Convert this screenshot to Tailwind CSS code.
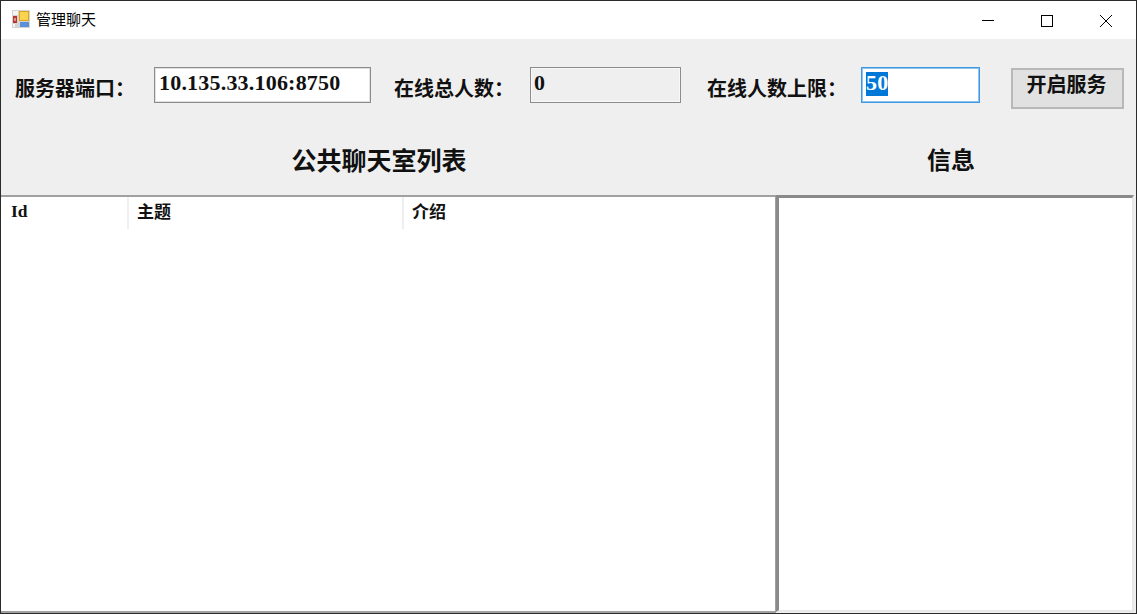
<!DOCTYPE html>
<html lang="zh-CN">
<head>
    <meta charset="UTF-8">
    <title>管理聊天</title>
    <script src="https://cdn.jsdelivr.net/npm/@tailwindcss/browser@4"></script>
</head>
<body class="bg-[#2b2b2b]">
    <div class="w-[1137px] h-[614px] border border-[#2b2b2b] flex flex-col bg-[#efefef] overflow-hidden font-['Liberation_Serif','Noto_Sans_CJK_SC',serif] text-[#111]">

        <!-- title bar -->
        <header class="h-[38px] shrink-0 bg-white flex items-center font-['Noto_Sans_CJK_SC',sans-serif]">
            <svg class="ml-[11px] -mt-[2px] w-[18px] h-[18px]" viewBox="0 0 18 18">
                <rect width="18" height="18" fill="#d4d4d4" />
                <rect x="1" y="1" width="5" height="4" fill="#f4f4f4" />
                <rect x="1" y="6" width="4" height="7" fill="#b8342e" />
                <rect x="2" y="8" width="2" height="3" fill="#e89088" />
                <rect x="1" y="14" width="2" height="3" fill="#f4f4f4" />
                <rect x="7" y="1" width="10" height="10" fill="#d9a520" />
                <rect x="8" y="2" width="8" height="8" fill="#fbd34d" />
                <rect x="8" y="12" width="9" height="5" fill="#5b8fd9" />
            </svg>
            <span class="ml-[6px] -mt-[3px] text-[15px] leading-none text-black">管理聊天</span>
            <div class="ml-auto flex items-center">
                <svg class="w-[58px] h-[38px]" viewBox="0 0 58 38"><path d="M23 19.5h12" stroke="#000" fill="none" /></svg>
                <svg class="w-[58px] h-[38px] ml-[1px]" viewBox="0 0 58 38"><rect x="23.5" y="14.5" width="11" height="11" stroke="#000" fill="none" /></svg>
                <svg class="w-[58px] h-[38px] ml-[1px] mr-[1px]" viewBox="0 0 58 38"><path d="M23 14l12 12M35 14l-12 12" stroke="#000" fill="none" /></svg>
            </div>
        </header>

        <!-- server settings -->
        <section class="h-[92px] shrink-0 flex items-start pt-[28px] text-[20px] font-bold leading-none">
            <label class="ml-[14px] w-[139px] mt-[11px] font-['Noto_Sans_CJK_SC',sans-serif]">服务器端口：</label>
            <div class="w-[217px] h-[36px] border border-[#8c8c8c] shadow-[inset_0_0_0_1px_#e0e0e0] bg-white pl-[4px] pt-[3px] text-[22px] tracking-[0.2px] leading-[24px]">10.135.33.106:8750</div>
            <label class="ml-[23px] w-[136px] mt-[11px] font-['Noto_Sans_CJK_SC',sans-serif]">在线总人数：</label>
            <div class="w-[151px] h-[36px] border border-[#8c8c8c] shadow-[inset_0_0_0_1px_#f8f8f8] bg-[#efefef] pl-[3px] pt-[3px] text-[22px] leading-[24px]">0</div>
            <label class="ml-[26px] w-[154px] mt-[11px] font-['Noto_Sans_CJK_SC',sans-serif]">在线人数上限：</label>
            <div class="w-[119px] h-[36px] border border-[#3d97e4] shadow-[inset_0_0_0_1px_#8fc3ef] bg-white pl-[4px] pt-[3px] text-[22px] tracking-[0.2px] leading-[24px]">
                <span class="inline-block bg-[#0078d7] text-white h-[24px] leading-[22px]">50</span>
            </div>
            <button class="ml-[31px] mt-[1px] w-[113px] h-[41px] border-2 border-[#b8b8b8] bg-[#e1e1e1] pb-[10px] pr-[2px] text-[20px] font-bold font-['Noto_Sans_CJK_SC',sans-serif]">开启服务</button>
        </section>

        <!-- section headings -->
        <div class="h-[64px] shrink-0 flex font-['Noto_Sans_CJK_SC',sans-serif] font-bold leading-none">
            <h2 class="w-[756px] pt-[16px] text-center text-[25px]">公共聊天室列表</h2>
            <h2 class="w-[340px] ml-[24px] pt-[16px] text-center text-[24px]">信息</h2>
        </div>

        <!-- panels -->
        <div class="flex-1 flex min-h-0">
            <div class="w-[775px] bg-white border-t-2 border-r border-b-2 border-[#a0a0a0]">
                <div class="flex h-[32px] text-[17.5px] font-bold leading-none">
                    <div class="w-[128px] pl-[10px] pt-[6px] border-r-2 border-[#efefef]">Id</div>
                    <div class="w-[275px] pl-[8px] pt-[5px] border-r-2 border-[#efefef] text-[17px] font-['Noto_Sans_CJK_SC',sans-serif]">主题</div>
                    <div class="flex-1 pl-[8px] pt-[5px] text-[17px] font-['Noto_Sans_CJK_SC',sans-serif]">介绍</div>
                </div>
            </div>
            <div class="flex-1 mr-[2px] mb-[1px] bg-white border-t-[3px] border-l-[3px] border-b-2 border-r-2 border-t-[#8a8a8a] border-l-[#8a8a8a] border-b-[#e8e8e8] border-r-[#e8e8e8]"></div>
        </div>
    </div>
</body>
</html>
